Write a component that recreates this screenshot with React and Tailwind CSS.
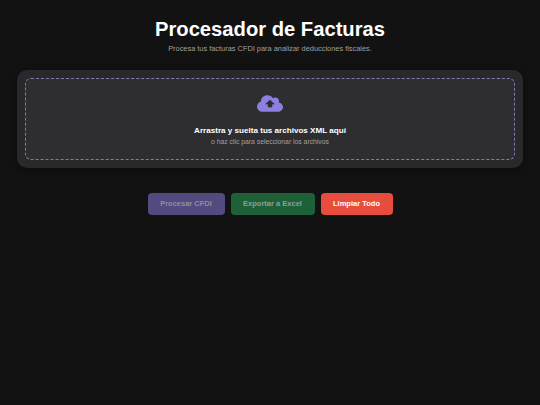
import React from "react";

export default function App() {
  return (
    <div className="min-h-[405px] bg-[#121212] font-['Liberation_Sans',Arial,sans-serif] px-[17px] pt-[17px] text-center">
      <h1 className="text-[20.2px] leading-[24px] font-bold text-white">Procesador de Facturas</h1>
      <p className="mt-[3px] text-[7.4px] leading-[9px] text-[#a0a0a0]">Procesa tus facturas CFDI para analizar deducciones fiscales.</p>
      <div className="mt-[17px] rounded-[10px] bg-[#29292b] p-[8px] shadow-[0_2px_8px_rgba(0,0,0,0.4)]">
        <div className="h-[82px] rounded-[6px] border border-dashed border-[#8377b8] bg-[#2e2e30] flex flex-col items-center pt-[15px]">
          <svg width="26" height="19" viewBox="0 0 640 512" preserveAspectRatio="none">
            <path fill="#8b7fe0" d="M537.6 226.6c4.1-10.7 6.4-22.4 6.4-34.6 0-53-43-96-96-96-19.7 0-38.1 6-53.3 16.2C367 64.2 315.3 32 256 32c-88.4 0-160 71.6-160 160 0 2.7.1 5.4.2 8.1C40.2 219.8 0 273.2 0 336c0 79.5 64.5 144 144 144h368c70.7 0 128-57.3 128-128 0-61.9-44-113.6-102.4-125.4z" />
            <path fill="#2e2e30" stroke="#2e2e30" strokeWidth="14" strokeLinejoin="round" d="M320 165L428 272H368V352H272V272H212Z" />
          </svg>
          <p className="mt-[13px] text-[8.1px] leading-[10px] font-bold text-white">Arrastra y suelta tus archivos XML aquí</p>
          <p className="mt-[1px] text-[6.8px] leading-[9px] text-[#a0a0a0]">o haz clic para seleccionar los archivos</p>
        </div>
      </div>
      <div className="mt-[25px] flex justify-center gap-[6px]">
        <button className="h-[22px] w-[77px] rounded-[4px] bg-[#534a80] text-[7.5px] font-bold text-[#8f8f9f]">Procesar CFDI</button>
        <button className="h-[22px] w-[84px] rounded-[4px] bg-[#1e6038] text-[7.5px] font-bold text-[#8f9f95]">Exportar a Excel</button>
        <button className="h-[22px] w-[72px] rounded-[4px] bg-[#e74c3c] text-[7.5px] font-bold text-white">Limpiar Todo</button>
      </div>
    </div>
  );
}
